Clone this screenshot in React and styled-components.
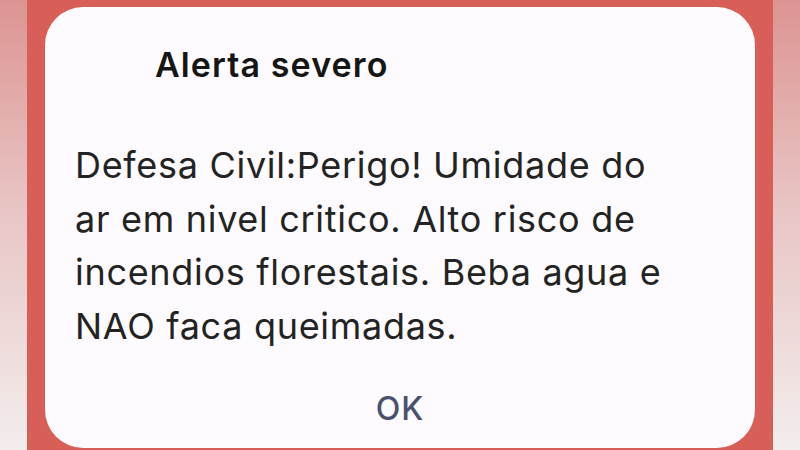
import React from 'react';
import styled, { createGlobalStyle } from 'styled-components';

const GlobalStyle = createGlobalStyle`
  html, body {
    margin: 0;
    padding: 0;
    width: 800px;
    height: 450px;
    overflow: hidden;
    background: #f4eeee;
  }
`;

const Screen = styled.div`
  display: flex;
  width: 800px;
  height: 450px;
  font-family: Inter, Roboto, "Noto Sans", sans-serif;
`;

const SideStrip = styled.div`
  width: ${props => props.w}px;
  flex-shrink: 0;
  background: linear-gradient(to bottom, #dc9492 0%, #e8c4c3 45%, #f3eded 100%);
`;

const Frame = styled.div`
  flex: 1;
  background: #d85f58;
  padding: 7px 18px 0 18px;
  display: flex;
`;

const Card = styled.div`
  flex: 1;
  height: 441px;
  background: #fdfbfd;
  border-radius: 38px;
  padding: 38px 0 0 0;
  box-sizing: border-box;
  display: flex;
  flex-direction: column;
`;

const Title = styled.h2`
  margin: 0 0 0 110px;
  font-size: 34px;
  line-height: 40px;
  font-weight: 600;
  letter-spacing: 1.1px;
  color: #161616;
`;

const Message = styled.p`
  margin: 54px 0 0 30px;
  font-size: 36px;
  line-height: 53.5px;
  font-weight: 400;
  letter-spacing: 0.7px;
  color: #232323;
  white-space: nowrap;
`;

const Actions = styled.div`
  margin-top: 36px;
  display: flex;
  justify-content: center;
`;

const OkButton = styled.button`
  border: none;
  background: none;
  padding: 0;
  font-family: inherit;
  font-size: 32px;
  line-height: 40px;
  font-weight: 500;
  letter-spacing: 1px;
  color: #4b5070;
`;

const lines = [
  'Defesa Civil:Perigo! Umidade do',
  'ar em nivel critico. Alto risco de',
  'incendios florestais. Beba agua e',
  'NAO faca queimadas.',
];

const App = () => (
  <>
    <GlobalStyle />
    <Screen>
      <SideStrip w={27} />
      <Frame>
        <Card>
          <Title>Alerta severo</Title>
          <Message>
            {lines.map((l, i) => (
              <React.Fragment key={i}>
                {l}
                {i < lines.length - 1 && <br />}
              </React.Fragment>
            ))}
          </Message>
          <Actions>
            <OkButton>OK</OkButton>
          </Actions>
        </Card>
      </Frame>
      <SideStrip w={27} />
    </Screen>
  </>
);

export default App;
